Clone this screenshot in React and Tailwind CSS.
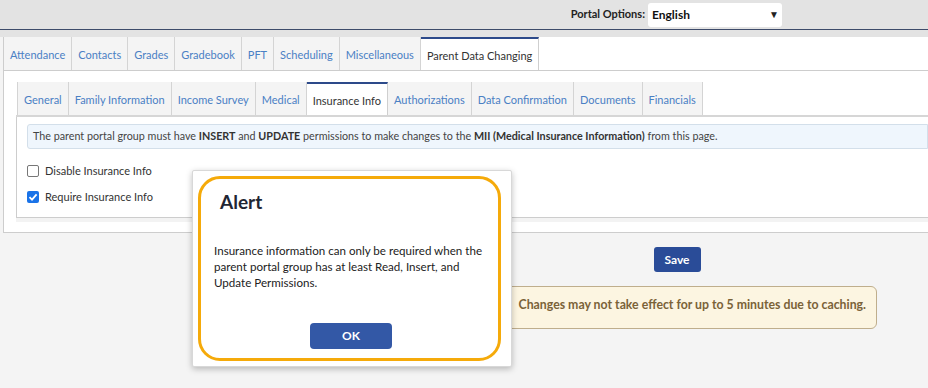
import React from 'react'

const outerTabs = ['Attendance', 'Contacts', 'Grades', 'Gradebook', 'PFT', 'Scheduling', 'Miscellaneous', 'Parent Data Changing']
const innerTabs = ['General', 'Family Information', 'Income Survey', 'Medical', 'Insurance Info', 'Authorizations', 'Data Confirmation', 'Documents', 'Financials']

const Tab = ({ label, active }) => (
  <div
    className={
      active
        ? 'h-full flex items-center px-[6px] pt-[3px] bg-white border-r border-[#cfcfcf] border-t-2 border-t-[#2d4a8a] text-[#333] -mb-px'
        : 'h-full flex items-center px-[6px] pt-[4px] bg-[#f4f4f4] border-r border-[#d4d4d4] text-[#4a80c4]'
    }
  >
    {label}
  </div>
)

const App = () => {
  return (
    <div className="relative w-[928px] h-[388px] overflow-hidden bg-[#f4f4f4] font-['Lato',sans-serif] text-[11px]">
      {/* header */}
      <div className="h-[30px] bg-[#e3e3e3] border-b border-[#3d4b6a] flex items-center justify-end pr-[146px]">
        <span className="font-bold text-[#222] mr-[3px]">Portal Options:</span>
        <div className="w-[134px] h-[24px] bg-white rounded-[3px] flex items-center justify-between pl-[4px] pr-[3px]">
          <span className="font-bold text-[#111] text-[12px]">English</span>
          <span className="text-[10px] text-[#222]">▼</span>
        </div>
      </div>
      <div className="h-[7px] bg-[#e3e3e3]" />

      {/* outer panel */}
      <div className="ml-[3px] bg-white border-l border-b border-[#cdcdcd] h-[196px]">
        <div className="h-[34px] flex border-b border-[#cdcdcd]">
          {outerTabs.map((t) => (
            <Tab key={t} label={t} active={t === 'Parent Data Changing'} />
          ))}
        </div>

        <div className="pl-[12px] pt-[11px]">
          <div className="h-[35px] flex border-b-2 border-[#d6d6d6] pl-[1px]">
            <div className="h-full border-l border-[#d4d4d4]" />
            {innerTabs.map((t) => (
              <Tab key={t} label={t} active={t === 'Insurance Info'} />
            ))}
          </div>
          <div className="border-l border-b border-[#cdcdcd] h-[101px] pl-[10px] pt-[7px]">
            <div className="h-[25px] bg-[#eff6fd] border border-[#d3dfea] rounded-l-[3px] flex items-center pl-[5px] text-[#444] text-[10.75px]">
              The parent portal group must have&nbsp;<b className="text-[#333]">INSERT</b>&nbsp;and&nbsp;<b className="text-[#333]">UPDATE</b>&nbsp;permissions to make changes to the&nbsp;<b className="text-[#333]">MII (Medical Insurance Information)</b>&nbsp;from this page.
            </div>
            <div className="flex items-center mt-[14px] text-[#333]">
              <span className="w-[12px] h-[12px] border border-[#777] rounded-[2px] bg-white mr-[6px]" />
              Disable Insurance Info
            </div>
            <div className="flex items-center mt-[9px] text-[#333]">
              <span className="w-[12px] h-[12px] rounded-[2px] bg-[#1a73e8] mr-[6px] flex items-center justify-center">
                <svg width="10" height="10" viewBox="0 0 10 10">
                  <path d="M1.5 5.2 L4 7.6 L8.6 2.4" stroke="white" strokeWidth="1.8" fill="none" />
                </svg>
              </span>
              Require Insurance Info
            </div>
          </div>
          <div className="h-[4px] bg-[#f3f3f3]" />
        </div>
      </div>

      {/* bottom area */}
      <div className="flex flex-col items-center pt-[14px] pl-[426px]">
        <div className="w-[47px] h-[25px] bg-[#2a4c98] rounded-[3px] text-white font-bold text-[12px] flex items-center justify-center">
          Save
        </div>
      </div>
      <div className="flex pt-[14px] pl-[477px]">
        <div className="w-[400px] h-[43px] bg-[#fcf5e1] border border-[#bfae8c] rounded-[6px] flex items-start justify-end pt-[9px] pr-[10px] text-[#7a6238] font-bold text-[12.3px]">
          Changes may not take effect for up to 5 minutes due to caching.
        </div>
      </div>

      {/* modal */}
      <div className="absolute left-[192px] top-[170px] w-[320px] h-[197px] bg-white border border-[#d8d8d8] rounded-[2px] shadow-[0_2px_6px_rgba(0,0,0,0.25)] p-[5px] pr-[10px]">
        <div className="h-full border-[3px] border-[#f5aa0a] rounded-[22px] pl-[13px] pr-[10px] pt-[9px]">
          <div className="text-[19px] font-bold text-[#1f2633] pl-[6px]">Alert</div>
          <p className="mt-[26px] text-[11.6px] leading-[16px] text-[#222]">
            Insurance information can only be required when the parent portal group has at least Read, Insert, and Update Permissions.
          </p>
          <div className="flex justify-center mt-[32px]">
            <div className="w-[82px] h-[26px] bg-[#3358a6] rounded-[4px] text-white font-bold text-[12px] flex items-center justify-center">
              OK
            </div>
          </div>
        </div>
      </div>
    </div>
  )
}

export default App
